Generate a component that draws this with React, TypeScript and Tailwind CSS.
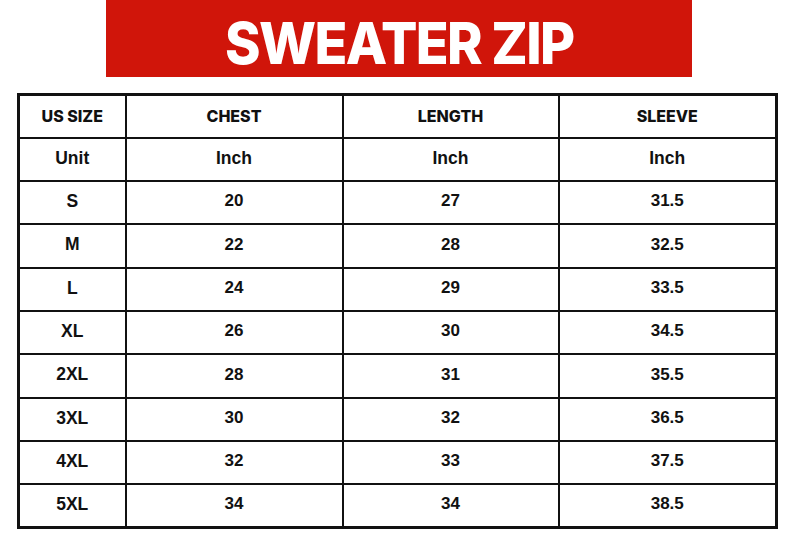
const headers = ["US SIZE", "CHEST", "LENGTH", "SLEEVE"];

const rows: [string, string, string, string][] = [
  ["S", "20", "27", "31.5"],
  ["M", "22", "28", "32.5"],
  ["L", "24", "29", "33.5"],
  ["XL", "26", "30", "34.5"],
  ["2XL", "28", "31", "35.5"],
  ["3XL", "30", "32", "36.5"],
  ["4XL", "32", "33", "37.5"],
  ["5XL", "34", "34", "38.5"],
];

const colWidths = ["w-[107px]", "w-[217px]", "w-[216px]", "w-[218px]"];

const cellClass =
  "h-[43.3px] border-2 border-[#111] p-0 text-center align-middle font-bold text-[#111]";

export default function App() {
  return (
    <div className="h-[553px] w-[794px] bg-white">
      {/* TITLE */}
      <div className="flex justify-center pl-[4px]">
        <div className="flex h-[77px] w-[586px] items-center justify-center bg-[#d0150a]">
          <h1 className="mt-[8px] scale-x-[0.93] font-['Inter',sans-serif] text-[58px] leading-none font-extrabold tracking-[-0.03em] text-white">
            SWEATER ZIP
          </h1>
        </div>
      </div>

      {/* SIZE TABLE */}
      <div className="flex justify-center pt-[16px] pl-[1px]">
        <table className="border-collapse border-[3px] border-[#111] font-['Liberation_Sans',Arial,sans-serif]">
          <thead>
            <tr>
              {headers.map((label, i) => (
                <th
                  key={label}
                  className={`${cellClass} ${colWidths[i]} font-['Inter',sans-serif] text-[16px] font-extrabold`}
                >
                  {label}
                </th>
              ))}
            </tr>
          </thead>
          <tbody>
            <tr>
              <td className={`${cellClass} pb-[2px] text-[17.5px]`}>Unit</td>
              <td className={`${cellClass} pb-[2px] text-[17.5px]`}>Inch</td>
              <td className={`${cellClass} pb-[2px] text-[17.5px]`}>Inch</td>
              <td className={`${cellClass} pb-[2px] text-[17.5px]`}>Inch</td>
            </tr>
            {rows.map((row) => (
              <tr key={row[0]}>
                {row.map((value, i) => (
                  <td
                    key={i}
                    className={`${cellClass} pb-[3px] ${i === 0 ? "text-[17.5px]" : "text-[17px]"}`}
                  >
                    {value}
                  </td>
                ))}
              </tr>
            ))}
          </tbody>
        </table>
      </div>
    </div>
  );
}
